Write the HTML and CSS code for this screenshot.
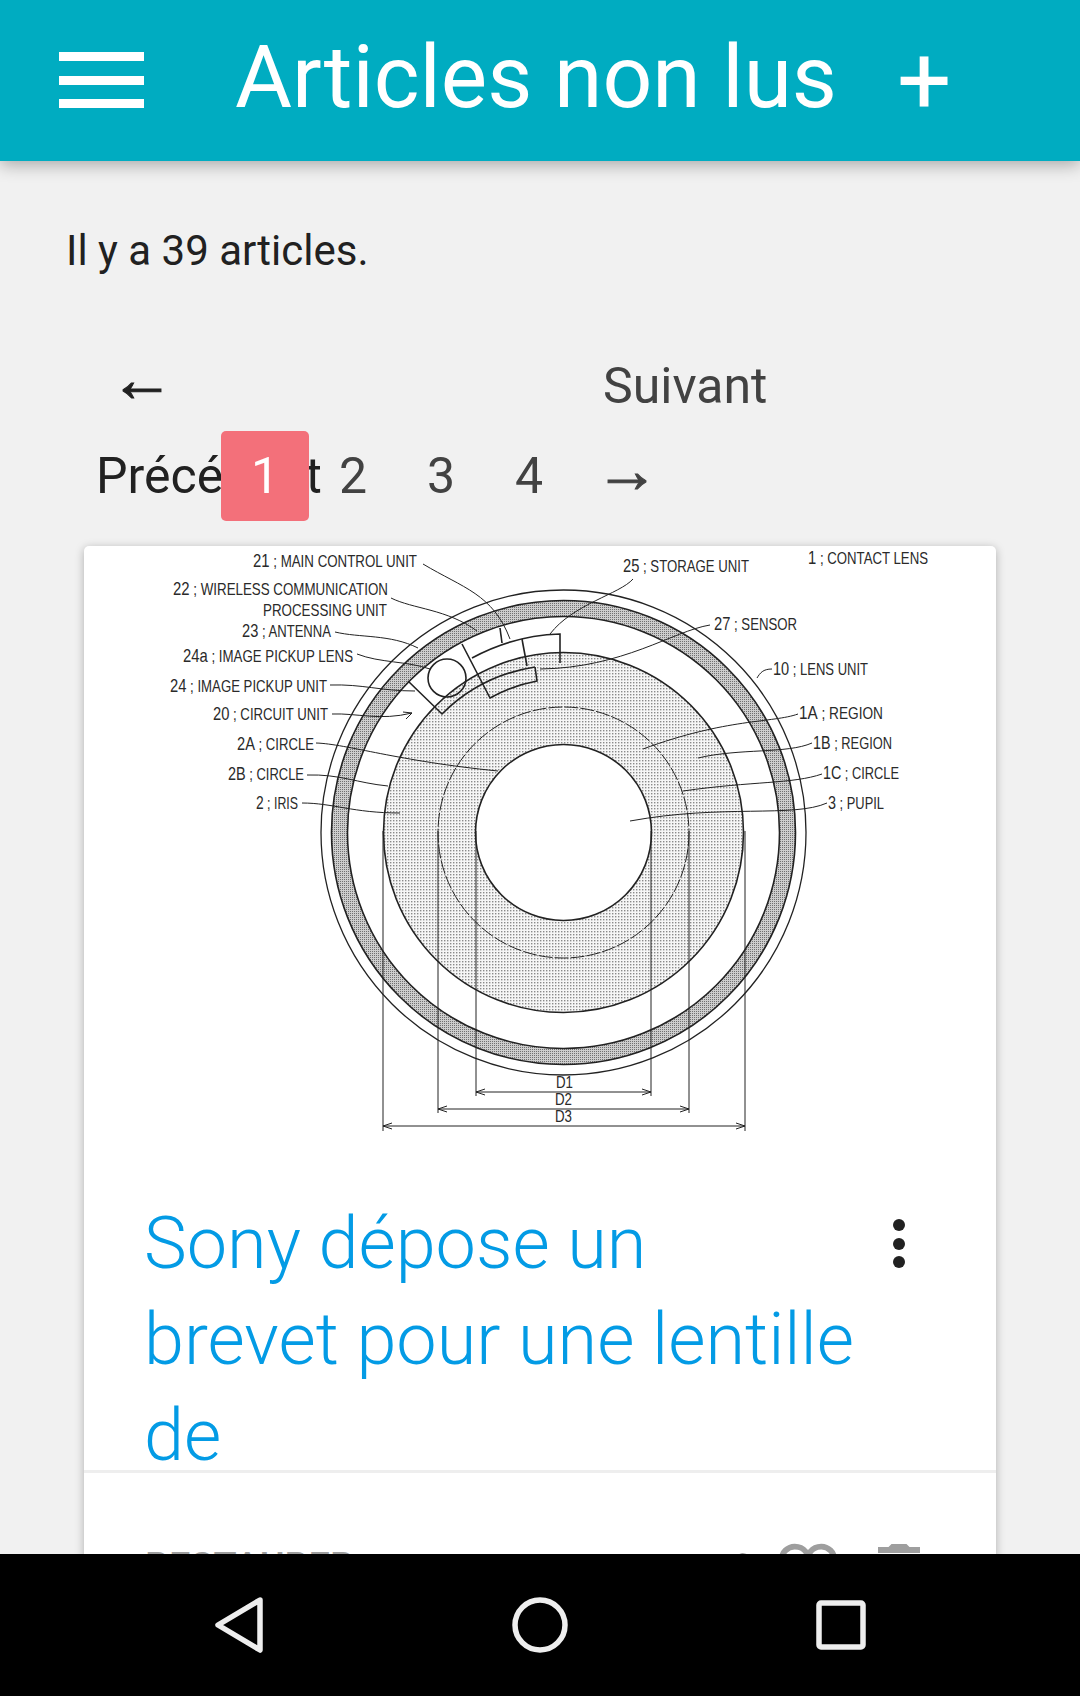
FILE: index.html
```html
<!DOCTYPE html>
<html lang="fr">
<head>
    <meta charset="UTF-8">
    <meta name="viewport" content="width=device-width, initial-scale=1.0">
    <title>Articles non lus</title>
    <link rel="stylesheet" href="styles.css">
</head>
<body>
    <div class="page">
        <header class="topbar">
            <div class="menu-icon"><span></span><span></span><span></span></div>
            <h1 class="topbar-title">Articles non lus</h1>
            <span class="topbar-add">+</span>
        </header>

        <main class="content">
            <p class="count">Il y a 39 articles.</p>

            <nav class="pagination">
                <a class="page-prev"><span class="prev-arrow">←</span><span class="prev-label">Précédent</span></a>
                <a class="page-num current">1</a>
                <a class="page-num">2</a>
                <a class="page-num">3</a>
                <a class="page-num">4</a>
                <a class="page-next"><span class="next-label">Suivant</span><span class="next-arrow">→</span></a>
            </nav>

            <article class="card">
                <!-- figure du brevet -->
                <svg class="patent" viewBox="84 545 912 590" xmlns="http://www.w3.org/2000/svg">
                    <defs>
                        <pattern id="dots" width="3" height="3" patternUnits="userSpaceOnUse">
                            <rect width="3" height="3" fill="#f6f6f6"/>
                            <rect width="1.4" height="1.4" fill="#8a8a8a"/>
                        </pattern>
                        <pattern id="band" width="2" height="2" patternUnits="userSpaceOnUse">
                            <rect width="2" height="2" fill="#cdcdcd"/>
                            <rect width="1" height="1" fill="#707070"/>
                        </pattern>
                    </defs>

                    <circle class="line mid" cx="563.5" cy="831.5" r="242.5"/>
                    <circle class="line thick band" cx="563.5" cy="831.5" r="232"/>
                    <circle class="line thick white" cx="563.5" cy="831.5" r="216"/>
                    <circle class="line thick iris" cx="563.5" cy="831.5" r="180"/>
                    <circle class="line dashed" cx="563.5" cy="831.5" r="125.5"/>
                    <circle class="line thick white" cx="563.5" cy="831.5" r="88"/>

                    <!-- unites sur le bord -->
                    <path class="line thick" d="M408 680 L442 713 A168 168 0 0 1 535 666"/>
                    <path class="line thick" d="M462 643 L490 697 A152 152 0 0 1 537 680 L535 666"/>
                    <path class="line thick" d="M472 657 A196 196 0 0 1 560 633 L560 662"/>
                    <path class="line thick" d="M522 638 L527 665"/>
                    <path class="line thick" d="M500 627 L502 642"/>
                    <circle class="line thick" cx="447" cy="677" r="19"/>

                    <!-- cotes -->
                    <path class="line" d="M476 830 V1095 M651 830 V1095 M438 830 V1112 M689 830 V1112 M383 830 V1130 M745 830 V1130"/>
                    <path class="line" d="M476 1091 H651 M476 1091 l9 -3 M476 1091 l9 3 M651 1091 l-9 -3 M651 1091 l-9 3"/>
                    <path class="line" d="M438 1108 H689 M438 1108 l9 -3 M438 1108 l9 3 M689 1108 l-9 -3 M689 1108 l-9 3"/>
                    <path class="line" d="M383 1125 H745 M383 1125 l9 -3 M383 1125 l9 3 M745 1125 l-9 -3 M745 1125 l-9 3"/>

                    <!-- traits de rappel -->
                    <path class="line" d="M423 563 C463 587 493 593 510 638"/>
                    <path class="line" d="M391 597 C413 608 447 608 477 630"/>
                    <path class="line" d="M335 631 C360 637 390 633 418 647"/>
                    <path class="line" d="M357 653 C380 662 407 660 430 668"/>
                    <path class="line" d="M330 684 C363 683 380 690 415 690"/>
                    <path class="line" d="M332 713 C357 712 380 720 412 712 M412 712 l-9 -1 M412 712 l-6 6"/>
                    <path class="line" d="M316 742 C347 743 397 760 498 770"/>
                    <path class="line" d="M307 774 C340 773 357 782 388 785"/>
                    <path class="line" d="M302 802 C333 802 353 812 400 812"/>
                    <path class="line" d="M633 578 C620 593 573 603 550 633"/>
                    <path class="line" d="M710 624 C673 630 623 667 540 668"/>
                    <path class="line" d="M772 668 C763 668 760 672 757 677"/>
                    <path class="line" d="M798 713 C773 722 727 717 643 748"/>
                    <path class="line" d="M812 742 C787 753 740 747 698 757"/>
                    <path class="line" d="M822 773 C793 783 753 780 683 790"/>
                    <path class="line" d="M827 802 C793 817 723 803 630 820"/>

                    <!-- legendes -->
                    <text class="label" x="253" y="566" textLength="164" lengthAdjust="spacingAndGlyphs"><tspan class="num">21</tspan> ; MAIN CONTROL UNIT</text>
                    <text class="label" x="173" y="594" textLength="215" lengthAdjust="spacingAndGlyphs"><tspan class="num">22</tspan> ; WIRELESS COMMUNICATION</text>
                    <text class="label" x="263" y="615" textLength="124" lengthAdjust="spacingAndGlyphs">PROCESSING UNIT</text>
                    <text class="label" x="242" y="636" textLength="89" lengthAdjust="spacingAndGlyphs"><tspan class="num">23</tspan> ; ANTENNA</text>
                    <text class="label" x="183" y="661" textLength="170" lengthAdjust="spacingAndGlyphs"><tspan class="num">24a</tspan> ; IMAGE PICKUP LENS</text>
                    <text class="label" x="170" y="691" textLength="157" lengthAdjust="spacingAndGlyphs"><tspan class="num">24</tspan> ; IMAGE PICKUP UNIT</text>
                    <text class="label" x="213" y="719" textLength="115" lengthAdjust="spacingAndGlyphs"><tspan class="num">20</tspan> ; CIRCUIT UNIT</text>
                    <text class="label" x="237" y="749" textLength="77" lengthAdjust="spacingAndGlyphs"><tspan class="num">2A</tspan> ; CIRCLE</text>
                    <text class="label" x="228" y="779" textLength="76" lengthAdjust="spacingAndGlyphs"><tspan class="num">2B</tspan> ; CIRCLE</text>
                    <text class="label" x="256" y="808" textLength="42" lengthAdjust="spacingAndGlyphs"><tspan class="num">2</tspan> ; IRIS</text>
                    <text class="label" x="623" y="571" textLength="126" lengthAdjust="spacingAndGlyphs"><tspan class="num">25</tspan> ; STORAGE UNIT</text>
                    <text class="label" x="808" y="563" textLength="120" lengthAdjust="spacingAndGlyphs"><tspan class="num">1</tspan> ; CONTACT LENS</text>
                    <text class="label" x="714" y="629" textLength="83" lengthAdjust="spacingAndGlyphs"><tspan class="num">27</tspan> ; SENSOR</text>
                    <text class="label" x="773" y="674" textLength="95" lengthAdjust="spacingAndGlyphs"><tspan class="num">10</tspan> ; LENS UNIT</text>
                    <text class="label" x="799" y="718" textLength="84" lengthAdjust="spacingAndGlyphs"><tspan class="num">1A</tspan> ; REGION</text>
                    <text class="label" x="813" y="748" textLength="79" lengthAdjust="spacingAndGlyphs"><tspan class="num">1B</tspan> ; REGION</text>
                    <text class="label" x="823" y="778" textLength="76" lengthAdjust="spacingAndGlyphs"><tspan class="num">1C</tspan> ; CIRCLE</text>
                    <text class="label" x="828" y="808" textLength="56" lengthAdjust="spacingAndGlyphs"><tspan class="num">3</tspan> ; PUPIL</text>
                    <text class="label" x="556" y="1087" textLength="17" lengthAdjust="spacingAndGlyphs">D1</text>
                    <text class="label" x="555" y="1104" textLength="17" lengthAdjust="spacingAndGlyphs">D2</text>
                    <text class="label" x="555" y="1121" textLength="17" lengthAdjust="spacingAndGlyphs">D3</text>
                </svg>

                <div class="card-head">
                    <h2 class="card-title">Sony dépose un<br>brevet pour une lentille<br>de</h2>
                    <div class="more-icon"><span></span><span></span><span></span></div>
                </div>

                <div class="card-actions">
                    <span class="action-text">RESTAURER</span>
                    <div class="action-icons">
                        <svg class="icon-share" viewBox="0 0 24 24"><path d="M18 16a3 3 0 0 0-2 .8L8.900 12.700a3 3 0 0 0 0-1.400l7-4.100A3 3 0 1 0 15 5a3 3 0 0 0 .1.700l-7 4.100a3 3 0 1 0 0 4.400l7.100 4.200A3 3 0 1 0 18 16z"/></svg>
                        <svg class="icon-heart" viewBox="0 0 24 24"><path d="M16.500 3A6 6 0 0 0 12 5.100 6 6 0 0 0 7.500 3 5.400 5.400 0 0 0 2 8.500c0 3.800 3.400 6.900 8.600 11.500L12 21.300l1.400-1.300c5.200-4.600 8.600-7.700 8.600-11.500A5.400 5.400 0 0 0 16.500 3zm-4.400 15.600l-.1.100-.1-.1C7.100 14.200 4 11.400 4 8.500A3.400 3.400 0 0 1 7.500 5a3.900 3.900 0 0 1 3.600 2.400h1.900A3.900 3.900 0 0 1 16.500 5 3.400 3.400 0 0 1 20 8.500c0 2.900-3.100 5.700-7.900 10.100z"/></svg>
                        <svg class="icon-trash" viewBox="0 0 24 24"><path d="M6 19a2 2 0 0 0 2 2h8a2 2 0 0 0 2-2V7H6v12zM19 4h-3.500l-1-1h-5l-1 1H5v2h14V4z"/></svg>
                    </div>
                </div>
            </article>
        </main>

        <footer class="navbar">
            <svg class="nav-back" viewBox="0 0 50 58"><path d="M46 4 L4 29 L46 54 Z"/></svg>
            <svg class="nav-home" viewBox="0 0 56 56"><circle cx="28" cy="28" r="25"/></svg>
            <svg class="nav-recent" viewBox="0 0 50 50"><rect x="3" y="3" width="44" height="44" rx="2"/></svg>
        </footer>
    </div>
</body>
</html>
```

FILE: styles.css
```css
* {
    box-sizing: border-box;
}

body {
    margin: 0;
    font-family: 'Roboto', Arial, sans-serif;
    background: #f1f1f1;
}

.page {
    height: 1696px;
    display: flex;
    flex-direction: column;
    overflow: hidden;
}

/* Barre du haut */
.topbar {
    height: 161px;
    flex: none;
    background-color: #00acc1;
    color: #ffffff;
    display: flex;
    align-items: flex-start;
    padding: 52px 0 0 59px;
    box-shadow: 0 4px 16px rgba(0, 0, 0, 0.3);
    position: relative;
    z-index: 2;
}

.menu-icon {
    width: 85px;
    height: 56px;
    display: flex;
    flex-direction: column;
    justify-content: space-between;
}

.menu-icon span {
    height: 9px;
    background: #ffffff;
}

.topbar-title {
    margin: -25px 0 0 91px;
    font-size: 87.500px;
    line-height: 100px;
    font-weight: 400;
    white-space: nowrap;
}

.topbar-add {
    margin: -21px 0 0 60px;
    font-size: 96px;
    line-height: 100px;
    font-weight: 400;
}

.content {
    flex: 1;
    min-height: 0;
    overflow: hidden;
    padding: 0 84px;
}

.count {
    margin: 65px 0 0 -18px;
    font-size: 42px;
    line-height: 50px;
    color: #212121;
}

/* Pagination */
.pagination {
    display: flex;
    margin: 65px 0 0 13px;
    font-size: 50px;
    line-height: 90px;
    color: #424242;
}

.page-prev {
    width: 124px;
    display: flex;
    flex-direction: column;
    color: #212121;
    white-space: nowrap;
}

.prev-arrow {
    height: 90px;
    padding-left: 13px;
    font-size: 64px;
    line-height: 78px;
    -webkit-text-stroke: 1px #212121;
}

.prev-label {
    margin-left: -1px;
}

.page-num {
    width: 88px;
    height: 90px;
    margin-top: 90px;
    text-align: center;
    position: relative;
}

.page-num.current {
    background: #f3707a;
    color: #ffffff;
    border-radius: 5px;
}

.page-next {
    padding-left: 30px;
    display: flex;
    flex-direction: column;
    white-space: nowrap;
}

.next-arrow {
    height: 90px;
    margin-left: -8px;
    font-size: 64px;
    line-height: 80px;
    -webkit-text-stroke: 1px #424242;
}

/* Carte */
.card {
    margin-top: 25px;
    background: #ffffff;
    border-radius: 5px;
    box-shadow: 0 2px 10px rgba(0, 0, 0, 0.28);
}

.patent {
    display: block;
    width: 912px;
    height: 590px;
}

.line {
    fill: none;
    stroke: #222222;
    stroke-width: 1;
}

.mid {
    stroke-width: 1.300;
}

.thick {
    stroke-width: 1.600;
}

.dashed {
    stroke-dasharray: 14 2;
}

.white {
    fill: #ffffff;
}

.band {
    fill: url(#band);
}

.iris {
    fill: url(#dots);
}

.label {
    font-family: 'Liberation Sans', Arial, sans-serif;
    font-size: 17px;
    fill: #2a2a2a;
}

.num {
    font-size: 19px;
}

.card-head {
    display: flex;
    justify-content: space-between;
    height: 337px;
    padding: 0 0 0 60px;
    border-bottom: 3px solid #eeeeee;
    overflow: hidden;
}

.card-title {
    margin: 0;
    padding-top: 60px;
    font-size: 72px;
    line-height: 96px;
    font-weight: 300;
    color: #039be5;
}

.more-icon {
    display: flex;
    flex-direction: column;
    gap: 6.500px;
    margin: 83px 91px 0 0;
}

.more-icon span {
    width: 12px;
    height: 12px;
    border-radius: 50%;
    background: #212121;
}

.card-actions {
    display: flex;
    justify-content: space-between;
    padding: 62px 61px 0 61px;
}

.action-text {
    margin-top: 10px;
    font-size: 38px;
    line-height: 44px;
    font-weight: 500;
    color: #9e9e9e;
}

.action-icons {
    display: flex;
    align-items: flex-start;
}

.action-icons svg {
    fill: #9e9e9e;
    flex: none;
}

/* Barre Android */
.navbar {
    height: 142px;
    flex: none;
    background: #000000;
    display: flex;
    justify-content: space-between;
    align-items: center;
    padding: 0 214px;
    position: relative;
    z-index: 2;
}

.navbar svg {
    fill: none;
    stroke: #eeeeee;
    stroke-width: 5.500;
    stroke-linejoin: round;
}

.nav-back {
    width: 50px;
    height: 58px;
}

.nav-home {
    width: 56px;
    height: 56px;
}

.nav-recent {
    width: 50px;
    height: 50px;
}

.icon-share {
    width: 60px;
    height: 60px;
    margin-top: 13px;
}

.icon-heart {
    width: 70px;
    height: 70px;
    margin-left: 15px;
}

.icon-trash {
    width: 72px;
    height: 72px;
    margin-left: 20px;
}
```
